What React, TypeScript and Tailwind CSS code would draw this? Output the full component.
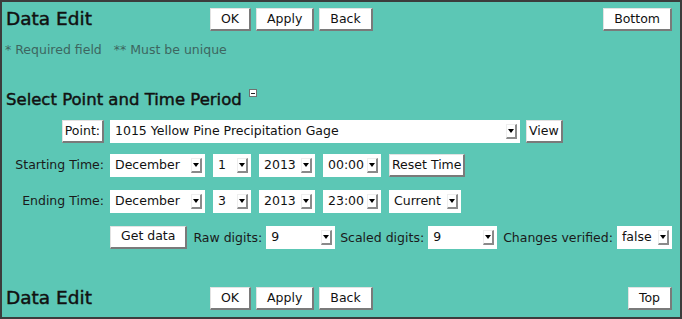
import React from "react";

function Btn({ children, wide }: { children: React.ReactNode; wide?: boolean }) {
  return (
    <div
      className={`h-[23px] flex items-center bg-white border-t border-l border-t-[#e2e2e2] border-l-[#e2e2e2] border-r-2 border-b-2 border-r-[#7a7a7a] border-b-[#7a7a7a] text-[12.5px] text-[#111] whitespace-nowrap ${
        wide ? "px-[10px]" : "px-[2px]"
      }`}
    >
      {children}
    </div>
  );
}

function Sel({ value, w }: { value: string; w: string }) {
  return (
    <div className={`h-[23px] flex items-center bg-white pl-[5px] text-[12.5px] text-[#111] whitespace-nowrap ${w}`}>
      <span>{value}</span>
      <div className="ml-auto mr-[3px] w-[11px] h-[15px] flex items-center justify-center bg-white border-t border-l border-t-[#eeeeee] border-l-[#eeeeee] border-r-2 border-b-2 border-r-[#8a8a8a] border-b-[#8a8a8a]">
        <div className="w-0 h-0 border-l-[3px] border-r-[3px] border-t-[4px] border-l-transparent border-r-transparent border-t-black" />
      </div>
    </div>
  );
}

function Label({ children }: { children: React.ReactNode }) {
  return <span className="text-[12.5px] text-[#1a1a1a] whitespace-nowrap">{children}</span>;
}

function HeaderRow({ last }: { last: string }) {
  return (
    <div className="flex items-center h-[23px] pl-[4px] pr-[8px]">
      <div className="w-[204px] text-[18.5px] leading-none text-[#111] [-webkit-text-stroke:0.45px_#111]">Data Edit</div>
      <div className="flex gap-[5px]">
        <Btn wide>OK</Btn>
        <Btn wide>Apply</Btn>
        <Btn wide>Back</Btn>
      </div>
      <div className="ml-auto">
        <Btn wide>{last}</Btn>
      </div>
    </div>
  );
}

export default function App() {
  return (
    <div className="w-[682px] h-[319px] bg-[#5cc7b5] border-2 border-[#3c3c3c] font-['DejaVu_Sans',sans-serif] flex flex-col overflow-hidden">
      <div className="mt-[6px]">
        <HeaderRow last="Bottom" />
      </div>
      <div className="mt-[12px] pl-[3px] text-[12.5px] leading-[14px] text-[#3d6660] whitespace-pre">
        {"* Required field   ** Must be unique"}
      </div>
      <div className="mt-[33px] flex items-start pl-[4px]">
        <span className="text-[16.5px] leading-[20px] text-[#111] [-webkit-text-stroke:0.45px_#111]">Select Point and Time Period</span>
        <div className="ml-[7px] mt-[-1px] w-[8px] h-[8px] bg-white border border-[#707070] flex items-center justify-center">
          <div className="w-[4px] h-[1px] bg-[#222]" />
        </div>
      </div>

      <div className="mt-[10px] flex items-center gap-[6px]">
        <div className="w-[102px] flex justify-end">
          <Btn>Point:</Btn>
        </div>
        <Sel value="1015 Yellow Pine Precipitation Gage" w="w-[410px]" />
        <Btn>View</Btn>
      </div>

      <div className="mt-[11px] flex items-center gap-[6px]">
        <div className="w-[102px] flex justify-end">
          <Label>Starting Time:</Label>
        </div>
        <div className="flex items-center gap-[8px]">
          <Sel value="December" w="w-[95px]" />
          <Sel value="1" w="w-[38px]" />
          <Sel value="2013" w="w-[56px]" />
          <Sel value="00:00" w="w-[58px]" />
          <Btn>Reset Time</Btn>
        </div>
      </div>

      <div className="mt-[13px] flex items-center gap-[6px]">
        <div className="w-[102px] flex justify-end">
          <Label>Ending Time:</Label>
        </div>
        <div className="flex items-center gap-[8px]">
          <Sel value="December" w="w-[95px]" />
          <Sel value="3" w="w-[38px]" />
          <Sel value="2013" w="w-[56px]" />
          <Sel value="23:00" w="w-[58px]" />
          <Sel value="Current" w="w-[72px]" />
        </div>
      </div>

      <div className="mt-[12px] flex items-center">
        <div className="w-[108px]" />
        <Btn wide>Get data</Btn>
        <div className="ml-[6px]">
          <Label>Raw digits:</Label>
        </div>
        <div className="ml-[4px]">
          <Sel value="9" w="w-[69px]" />
        </div>
        <div className="ml-[5px]">
          <Label>Scaled digits:</Label>
        </div>
        <div className="ml-[4px]">
          <Sel value="9" w="w-[69px]" />
        </div>
        <div className="ml-[6px]">
          <Label>Changes verified:</Label>
        </div>
        <div className="ml-[4px]">
          <Sel value="false" w="w-[55px]" />
        </div>
      </div>

      <div className="mt-[38px]">
        <HeaderRow last="Top" />
      </div>
    </div>
  );
}
